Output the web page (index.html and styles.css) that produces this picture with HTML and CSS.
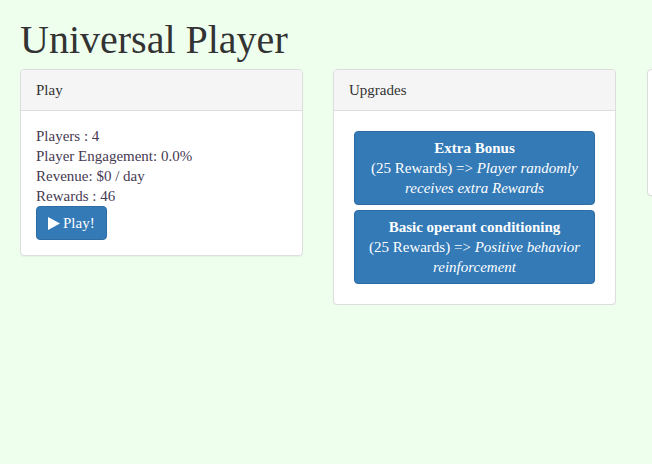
FILE: index.html
```html
<!DOCTYPE html>
<html>
<head>
<meta charset="utf-8">
<link rel="stylesheet" href="styles.css">
</head>
<body>
<div class="page">
  <h1 class="title">Universal Player</h1>
  <div class="row">
    <div class="panel">
      <div class="panel-heading">Play</div>
      <div class="panel-body">
        <div class="line">Players : 4</div>
        <div class="line">Player Engagement: 0.0%</div>
        <div class="line">Revenue: $0 / day</div>
        <div class="line">Rewards : 46</div>
        <button class="btn btn-play"><svg class="play-icon" width="12" height="13" viewBox="0 0 12 13"><path d="M0 0 L12 6.5 L0 13 Z" fill="#fff"/></svg> Play!</button>
      </div>
    </div>
    <div class="panel">
      <div class="panel-heading">Upgrades</div>
      <div class="panel-body upgrades">
        <button class="btn btn-upgrade"><b>Extra Bonus</b><br>(25 Rewards) =&gt; <i>Player randomly receives extra Rewards</i></button>
        <button class="btn btn-upgrade"><b>Basic operant conditioning</b><br>(25 Rewards) =&gt; <i>Positive behavior reinforcement</i></button>
      </div>
    </div>
    <div class="panel panel-empty"></div>
  </div>
</div>
</body>
</html>
```
FILE: styles.css
```css
html, body {
  margin: 0;
  padding: 0;
}
body {
  background: #eeffee;
  font-family: "Liberation Serif", serif;
  font-size: 15px;
  line-height: 20px;
  color: #463a52;
  overflow: hidden;
}
.page {
  padding: 0 0 0 20px;
}
.title {
  margin: 20px 0 10px 0;
  font-family: "Liberation Serif", serif;
  font-weight: normal;
  font-size: 40px;
  line-height: 39px;
  color: #333;
}
.row {
  display: flex;
  gap: 30px;
  align-items: flex-start;
  width: 1000px;
}
.panel {
  width: 283px;
  flex: none;
  box-sizing: border-box;
  background: #fff;
  border: 1px solid #ddd;
  border-radius: 4px;
  box-shadow: 0 1px 1px rgba(0,0,0,0.05);
}
.panel-heading {
  background: #f5f5f5;
  border-bottom: 1px solid #ddd;
  border-radius: 3px 3px 0 0;
  padding: 10px 15px;
  color: #333;
}
.panel-body {
  padding: 15px;
}
.panel-empty {
  height: 127px;
  margin-left: 1px;
}
.btn {
  display: inline-block;
  font-family: inherit;
  font-size: 15px;
  line-height: 20px;
  color: #fff;
  background: #337ab7;
  border: 1px solid #2e6da4;
  border-radius: 4px;
  padding: 6px 12px;
  cursor: pointer;
}
.btn-play {
  display: flex;
  align-items: center;
  gap: 3px;
  padding: 6px 11px;
}
.play-icon {
  display: block;
}
.upgrades {
  display: flex;
  flex-direction: column;
  gap: 5px;
  padding: 20px;
}
.btn-upgrade {
  display: block;
  width: 100%;
  text-align: center;
  padding: 6px 12px;
}
```
